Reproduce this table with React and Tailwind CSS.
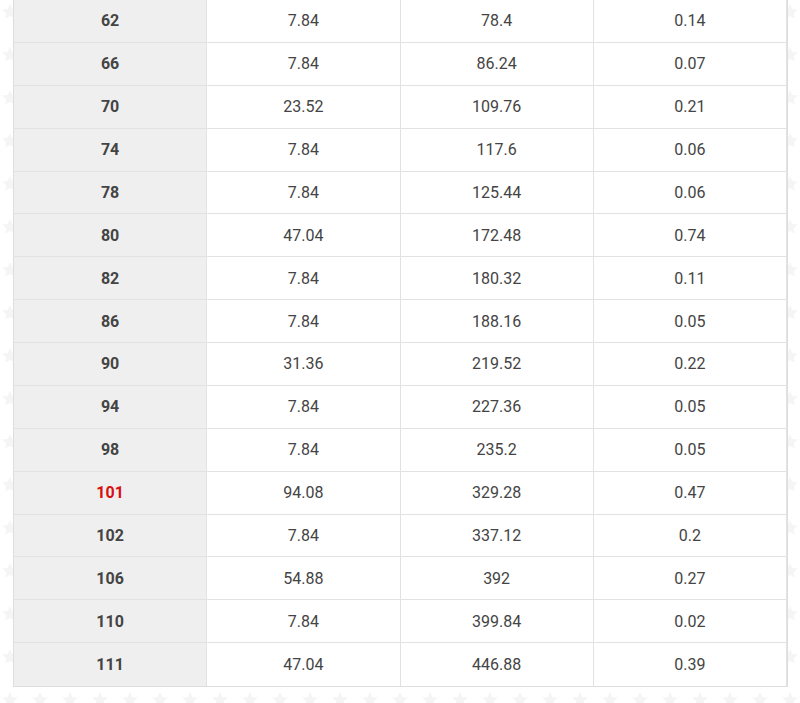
const rows = [
    ["62", "7.84", "78.4", "0.14"],
    ["66", "7.84", "86.24", "0.07"],
    ["70", "23.52", "109.76", "0.21"],
    ["74", "7.84", "117.6", "0.06"],
    ["78", "7.84", "125.44", "0.06"],
    ["80", "47.04", "172.48", "0.74"],
    ["82", "7.84", "180.32", "0.11"],
    ["86", "7.84", "188.16", "0.05"],
    ["90", "31.36", "219.52", "0.22"],
    ["94", "7.84", "227.36", "0.05"],
    ["98", "7.84", "235.2", "0.05"],
    ["101", "94.08", "329.28", "0.47", true],
    ["102", "7.84", "337.12", "0.2"],
    ["106", "54.88", "392", "0.27"],
    ["110", "7.84", "399.84", "0.02"],
    ["111", "47.04", "446.88", "0.39"],
]

const StarBackground = () => (
    <svg className="absolute inset-0 w-full h-full" aria-hidden="true">
        <defs>
            <pattern id="stars" width="30" height="43" patternUnits="userSpaceOnUse" x="-5" y="-8">
                <path
                    d="M15 12 l2.4 5 5.4 .6 -4 3.7 1.1 5.3 -4.9 -2.7 -4.9 2.7 1.1 -5.3 -4 -3.7 5.4 -.6z"
                    fill="#f5f5f5"
                />
            </pattern>
        </defs>
        <rect width="100%" height="100%" fill="url(#stars)" />
    </svg>
)

export default function App() {
    return (
        <div className="relative h-[703px] w-[800px] overflow-hidden bg-white font-['Roboto',sans-serif] text-[16px] text-[#444]">
            <StarBackground />
            <div className="relative ml-[13px] w-[775px] border-l border-r border-b border-[#dedede]">
                {rows.map(([id, a, b, c, red]) => (
                    <div key={id} className="grid grid-cols-4 h-[42.875px] border-b border-[#e2e2e2] last:border-b-0 [&>div]:pt-px">
                        <div className={"flex items-center justify-center bg-[#efefef] border-r border-[#e2e2e2] font-bold " + (red ? "text-[#d81010]" : "text-[#444]")}>
                            {id}
                        </div>
                        <div className="flex items-center justify-center bg-white border-r border-[#e2e2e2]">{a}</div>
                        <div className="flex items-center justify-center bg-white border-r border-[#e2e2e2]">{b}</div>
                        <div className="flex items-center justify-center bg-white border-r border-[#e2e2e2]">{c}</div>
                    </div>
                ))}
            </div>
        </div>
    )
}
